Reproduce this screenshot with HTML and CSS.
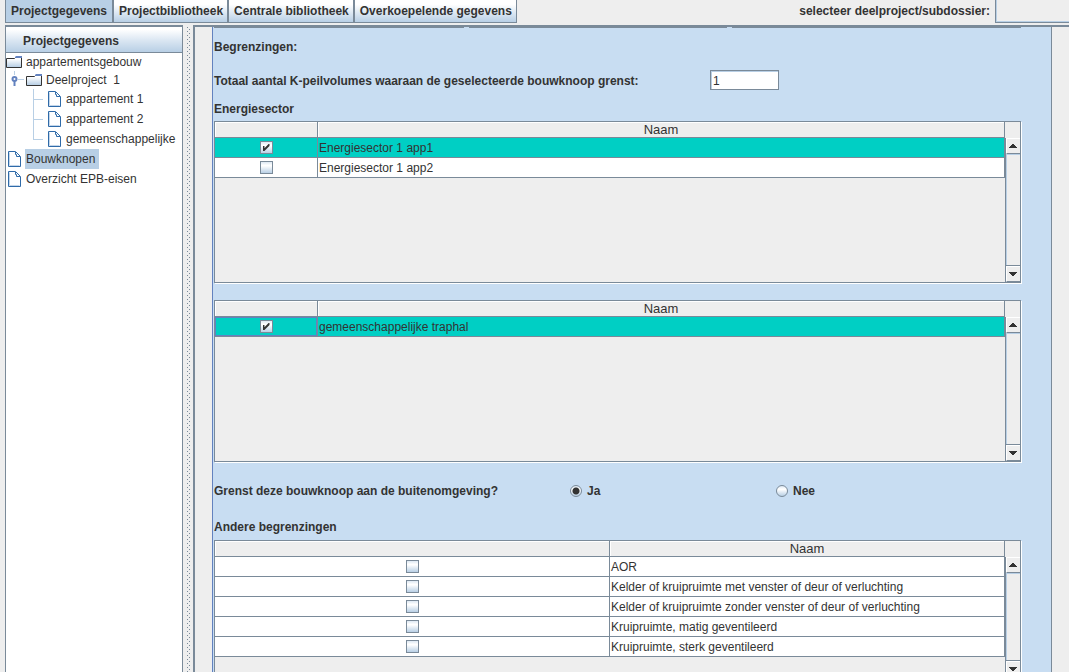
FILE: index.html
```html
<!DOCTYPE html>
<html lang="nl">
<head>
<meta charset="utf-8">
<title>Projectgegevens</title>
<link rel="stylesheet" href="styles.css">
</head>
<body>
<svg class="defs" aria-hidden="true">
  <defs>
    <linearGradient id="fg" x1="0" y1="0" x2="0" y2="1"><stop offset="0" stop-color="#fff"/><stop offset="1" stop-color="#b8cfe5"/></linearGradient>
  </defs>
  <symbol id="folder" viewBox="0 0 16 14">
    <path d="M1 4h14v8H1z" fill="url(#fg)"/>
    <path d="M.5 12.500V3.500H8.500L9.500 2.500H15.500V12.500Z" fill="none" stroke="#333"/>
    <path d="M9 3V2l1-1h6v2z" fill="#6382bf"/>
  </symbol>
  <symbol id="leaf" viewBox="0 0 14 16">
    <path d="M1.500 .5H8.500L13.500 5.500V15.500H1.500Z" fill="#fff" stroke="#2f6aa8"/>
    <path d="M2.500 14.500V1.500M2.500 14.500H12.500" fill="none" stroke="#c3d6ea"/>
    <path d="M8.500 1V3.500H9.500V5.500H13" fill="none" stroke="#2f6aa8"/>
  </symbol>
</svg>
<div class="app">
  <header class="topbar">
    <nav class="tabs">
      <button class="tab tab-active">Projectgegevens</button>
      <button class="tab">Projectbibliotheek</button>
      <button class="tab">Centrale bibliotheek</button>
      <button class="tab">Overkoepelende gegevens</button>
    </nav>
    <label class="picker-label" for="picker">selecteer deelproject/subdossier:</label>
    <select class="picker" id="picker"><option></option></select>
  </header>
  <main class="split">
    <aside class="sidebar">
      <button class="side-head">Projectgegevens</button>
      <ul class="tree">
        <li class="node node-short"><svg class="folder"><use href="#folder"/></svg><span class="name">appartementsgebouw</span></li>
        <li class="node node-short"><svg class="handle" viewBox="0 0 20 18"><path d="M8.500 0V4M12 8.500H18" stroke="#b8cfe5"/><circle cx="8.500" cy="8" r="2" fill="#fff" stroke="#6382bf" stroke-width="2"/><path d="M8.500 10V15" stroke="#6382bf" stroke-width="2"/></svg><svg class="folder"><use href="#folder"/></svg><span class="name">Deelproject&nbsp; 1</span></li>
        <li class="node child"><svg class="leaf"><use href="#leaf"/></svg><span class="name">appartement 1</span></li>
        <li class="node child"><svg class="leaf"><use href="#leaf"/></svg><span class="name">appartement 2</span></li>
        <li class="node child child-last"><svg class="leaf"><use href="#leaf"/></svg><span class="name">gemeenschappelijke</span></li>
        <li class="node"><svg class="leaf leaf-root"><use href="#leaf"/></svg><span class="name selected">Bouwknopen</span></li>
        <li class="node"><svg class="leaf leaf-root"><use href="#leaf"/></svg><span class="name">Overzicht EPB-eisen</span></li>
      </ul>
    </aside>
    <div class="divider"><div class="dots"></div></div>
    <section class="pane">
      <form class="form">
        <div class="edge"><span class="edge-part edge-left"></span><span class="edge-part edge-mid"></span><span class="edge-part"></span></div>
        <h2 class="title first-title">Begrenzingen:</h2>
        <div class="field">
          <label class="field-label" for="volumes">Totaal aantal K-peilvolumes waaraan de geselecteerde bouwknoop grenst:</label>
          <input class="textbox" id="volumes" type="text" value="1">
        </div>
        <h2 class="title">Energiesector</h2>
        <div class="grid-box">
          <div class="grid-view">
            <table class="grid">
              <thead><tr><th class="narrow"></th><th>Naam</th></tr></thead>
              <tbody>
                <tr class="on"><td class="tick"><input class="check" id="s1" type="checkbox" checked></td><td><label for="s1">Energiesector 1 app1</label></td></tr>
                <tr><td class="tick"><input class="check" id="s2" type="checkbox"></td><td><label for="s2">Energiesector 1 app2</label></td></tr>
              </tbody>
            </table>
          </div>
          <div class="scroll"><div class="corner"></div><button class="arrow" type="button" aria-label="Omhoog"><svg class="glyph" viewBox="0 0 8 4"><path d="M3 0h2v1h1v1h1v1h1v1H0V3h1V2h1V1h1z"/></svg></button><div class="track"></div><button class="arrow arrow-down" type="button" aria-label="Omlaag"><svg class="glyph" viewBox="0 0 8 4"><path d="M0 0h8v1H7v1H6v1H5v1H3V3H2V2H1V1H0z"/></svg></button></div>
        </div>
        <div class="grid-box second">
          <div class="grid-view">
            <table class="grid">
              <thead><tr><th class="narrow"></th><th>Naam</th></tr></thead>
              <tbody>
                <tr class="on"><td class="tick focus"><input class="check" id="t1" type="checkbox" checked></td><td><label for="t1">gemeenschappelijke traphal</label></td></tr>
              </tbody>
            </table>
          </div>
          <div class="scroll"><div class="corner"></div><button class="arrow" type="button" aria-label="Omhoog"><svg class="glyph" viewBox="0 0 8 4"><path d="M3 0h2v1h1v1h1v1h1v1H0V3h1V2h1V1h1z"/></svg></button><div class="track"></div><button class="arrow arrow-down" type="button" aria-label="Omlaag"><svg class="glyph" viewBox="0 0 8 4"><path d="M0 0h8v1H7v1H6v1H5v1H3V3H2V2H1V1H0z"/></svg></button></div>
        </div>
        <div class="question">
          <span>Grenst deze bouwknoop aan de buitenomgeving?</span>
          <label class="option"><input class="radio" type="radio" name="buiten" checked>Ja</label>
          <label class="option"><input class="radio" type="radio" name="buiten">Nee</label>
        </div>
        <h2 class="title last-title">Andere begrenzingen</h2>
        <div class="grid-box tail">
          <div class="grid-view">
            <table class="grid">
              <thead><tr><th class="half"></th><th>Naam</th></tr></thead>
              <tbody>
                <tr><td class="tick"><input class="check" id="a1" type="checkbox"></td><td><label for="a1">AOR</label></td></tr>
                <tr><td class="tick"><input class="check" id="a2" type="checkbox"></td><td><label for="a2">Kelder of kruipruimte met venster of deur of verluchting</label></td></tr>
                <tr><td class="tick"><input class="check" id="a3" type="checkbox"></td><td><label for="a3">Kelder of kruipruimte zonder venster of deur of verluchting</label></td></tr>
                <tr><td class="tick"><input class="check" id="a4" type="checkbox"></td><td><label for="a4">Kruipruimte, matig geventileerd</label></td></tr>
                <tr><td class="tick"><input class="check" id="a5" type="checkbox"></td><td><label for="a5">Kruipruimte, sterk geventileerd</label></td></tr>
              </tbody>
            </table>
          </div>
          <div class="scroll"><div class="corner"></div><button class="arrow" type="button" aria-label="Omhoog"><svg class="glyph" viewBox="0 0 8 4"><path d="M3 0h2v1h1v1h1v1h1v1H0V3h1V2h1V1h1z"/></svg></button><div class="track"></div><button class="arrow arrow-down" type="button" aria-label="Omlaag"><svg class="glyph" viewBox="0 0 8 4"><path d="M0 0h8v1H7v1H6v1H5v1H3V3H2V2H1V1H0z"/></svg></button></div>
        </div>
      </form>
    </section>
  </main>
</div>
</body>
</html>
```
FILE: styles.css
```css
:root {
  --line: #7a8a99;
  --face: #eeeeee;
  --pale: #b8cfe5;
  --metal: linear-gradient(#dde8f3, #ffffff 30%, #ffffff 35%, #b8cfe5);
}

* { box-sizing: border-box; }

body {
  margin: 0;
  background: var(--face);
  color: #333333;
  font: 12px/16px "Liberation Sans", Arial, sans-serif;
}

button, input, select { font: inherit; color: inherit; margin: 0; padding: 0; border-radius: 0; }

.defs { position: absolute; width: 0; height: 0; }

.app { display: flex; flex-direction: column; height: 100vh; overflow: hidden; }

.topbar { display: flex; height: 25px; padding: 0 0 2px 5px; font-weight: bold; }
.tabs { display: flex; flex: 1; }
.tab {
  padding: 0 4px 1px 5px;
  border: 1px solid var(--line);
  border-top: 0;
  background: linear-gradient(#ffffff 20%, #b8cfe5);
}
.tab-active { padding-right: 5px; background: var(--pale); }
.picker-label { padding: 3px 5px 0 0; }
.picker {
  appearance: none;
  width: 74px;
  border: 1px solid var(--line);
  border-width: 0 0 1px 1px;
  box-shadow: inset 1px -1px var(--pale);
  background: var(--face);
}

.split { display: flex; flex: 1; min-height: 0; padding-left: 5px; }

.sidebar {
  flex: none;
  width: 178px;
  overflow: hidden;
  border: solid var(--line);
  border-width: 2px 1px 0 1px;
  background: #ffffff;
}
.side-head {
  display: block;
  width: 100%;
  height: 26px;
  padding: 2px 0 0 17px;
  border: solid var(--line);
  border-width: 0 0 1px;
  background: linear-gradient(#ffffff 10%, #dde8f3 50%, #b8cfe5);
  font-weight: bold;
  text-align: left;
}
.tree { margin: 0; padding: 0; list-style: none; }
.node { display: flex; align-items: center; height: 20px; white-space: nowrap; }
.node-short { height: 18px; }
.folder { flex: none; width: 16px; height: 14px; margin-right: 3px; }
.handle { flex: none; width: 20px; height: 18px; }
.leaf { flex: none; width: 14px; height: 16px; margin-right: 4px; }
.leaf-root { margin-left: 1px; }
.name { height: 20px; line-height: 20px; padding: 0 4px 0 1px; }
.selected { background: var(--pale); }
.child {
  padding-left: 41px;
  background:
    linear-gradient(var(--pale), var(--pale)) 27px 0 / 1px 100% no-repeat,
    linear-gradient(var(--pale), var(--pale)) 27px 10px / 10px 1px no-repeat;
}
.child-last { background-size: 1px 10px, 10px 1px; }

.divider { flex: none; width: 10px; padding: 2px 2px 0 4px; }
.dots {
  height: 100%;
  background:
    conic-gradient(at 1px 1px, transparent 270deg, var(--line) 0) 0 0 / 4px 4px,
    conic-gradient(at 1px 1px, transparent 270deg, var(--line) 0) 2px 2px / 4px 4px;
}

.pane {
  flex: 1;
  min-width: 0;
  padding: 0 17px 0 17px;
  border: solid var(--line);
  border-width: 2px 0 0 2px;
}
.form {
  display: flex;
  flex-direction: column;
  height: 100%;
  overflow: hidden;
  padding: 0 30px 0 1px;
  border-left: 1px solid #6382bf;
  border-right: 1px solid var(--line);
  background: #c8ddf2;
}
.form > * { flex: none; }
.edge { display: flex; gap: 5px; height: 1px; }
.edge-part { flex: 1; background: var(--line); }
.edge-left { flex: none; width: 250px; }
.edge-mid { flex: none; width: 258px; }
.title { margin: 0 0 4px; font-size: 12px; line-height: 16px; font-weight: bold; }
.first-title { margin: 11px 0 15px; }
.last-title { margin-bottom: 5px; }
.field { display: flex; align-items: center; height: 20px; margin-bottom: 11px; font-weight: bold; }
.field-label { width: 496px; padding-top: 2px; }
.textbox {
  width: 69px;
  height: 20px;
  padding: 1px 2px 0;
  border: 1px solid var(--line);
  box-shadow: inset 1px 1px var(--pale);
  background: #ffffff;
  font-weight: normal;
}

.grid-box {
  display: flex;
  height: 162px;
  border: 1px solid var(--line);
  box-shadow: 1px 1px #ffffff;
  background: var(--face);
}
.second { margin-top: 17px; }
.tail { height: 138px; }
.grid-view { flex: 1; min-width: 0; }
.grid { width: 100%; border-collapse: separate; border-spacing: 0; table-layout: fixed; }
.grid th {
  height: 16px;
  padding: 1px 0 0;
  border: solid var(--line);
  border-width: 0 1px 1px 0;
  box-shadow: inset 1px 1px #ffffff;
  font-size: 13px;
  font-weight: normal;
  line-height: 14px;
}
.grid td {
  height: 20px;
  padding: 1px 1px 0;
  border: solid var(--line);
  border-width: 0 1px 1px 0;
  background: #ffffff;
  line-height: 18px;
}
.grid .on td { background: #00cfc4; }
.grid .tick { padding: 0; text-align: center; }
.grid .focus { box-shadow: inset 0 0 0 1px #6382bf; }
.narrow { width: 103px; }
.half { width: 50%; }

.check {
  appearance: none;
  display: block;
  width: 13px;
  height: 13px;
  margin: 0 auto;
  border: 1px solid var(--line);
  background: var(--metal);
}
.check:checked::before {
  content: "";
  display: block;
  width: 7px;
  height: 7px;
  margin: 2px 0 0 2px;
  background: #333333;
  clip-path: polygon(0 28%, 28% 28%, 28% 62%, 86% 0, 100% 0, 100% 28%, 28% 100%, 0 100%);
}

.scroll {
  display: flex;
  flex-direction: column;
  width: 15px;
  box-shadow: inset 1px 0 var(--line);
}
.corner { height: 16px; background: var(--face); }
.arrow {
  display: flex;
  align-items: center;
  justify-content: center;
  height: 16px;
  padding-right: 1px;
  margin-left: 1px;
  border: 1px solid #ffffff;
  border-right: 0;
  border-bottom-color: var(--line);
  background: var(--face);
}
.arrow-down { box-shadow: 0 -1px var(--line); }
.glyph { width: 8px; height: 4px; fill: #333333; shape-rendering: crispEdges; }
.track { flex: 1; margin-left: 1px; box-shadow: inset 1px 1px var(--pale); }

.question {
  display: grid;
  grid-template-columns: 356px 206px 1fr;
  align-items: center;
  height: 20px;
  margin: 19px 0 18px;
  font-weight: bold;
}
.option { display: flex; align-items: center; gap: 5px; }
.radio {
  appearance: none;
  width: 12px;
  height: 12px;
  border: 1px solid var(--line);
  border-radius: 50%;
  background: var(--metal);
}
.radio:checked { background: radial-gradient(circle, #333333 3px, transparent 4px), var(--metal); }
```
